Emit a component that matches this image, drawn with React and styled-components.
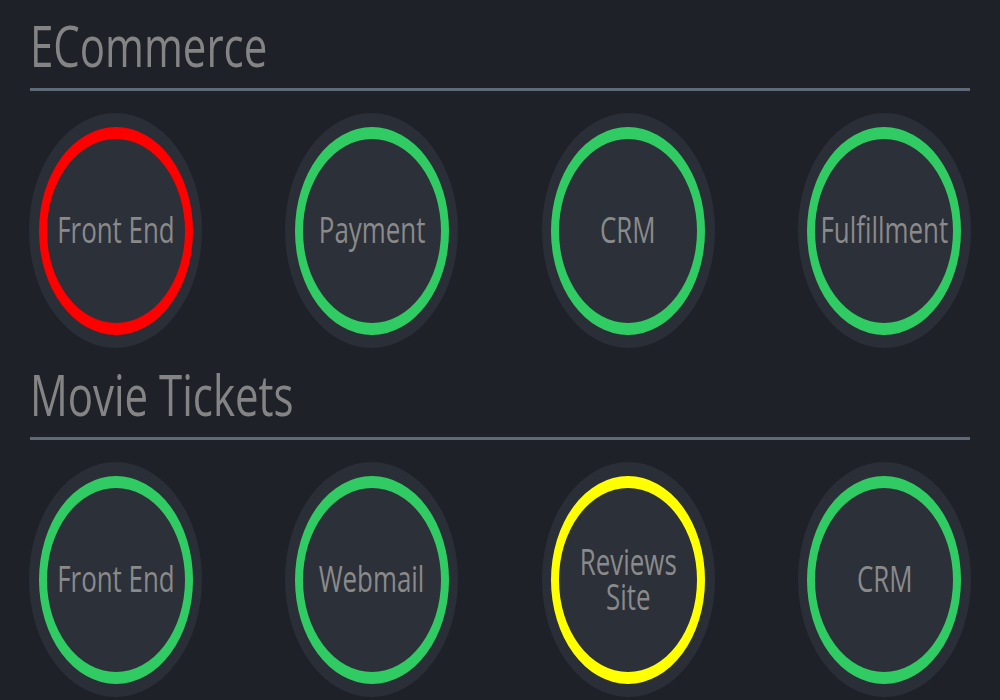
import React from 'react';
import styled, { createGlobalStyle } from 'styled-components';

const Global = createGlobalStyle`
  html, body { margin: 0; padding: 0; background: #1f2128; }
  body { font-family: "Open Sans", "Noto Sans", sans-serif; }
`;

const Page = styled.main`
  width: 1000px;
  height: 700px;
  overflow: hidden;
  box-sizing: border-box;
  padding: 17px 30px 0;
  background: #1f2128;
`;

const Section = styled.section`
  & + & { margin-top: 18px; }
`;

const Title = styled.h1`
  margin: 0;
  font-weight: 400;
  font-size: 56px;
  line-height: 56px;
  color: #848484;
  white-space: nowrap;
  transform: scaleX(0.75);
  transform-origin: left center;
`;

const Rule = styled.hr`
  margin: 15px 0 0;
  border: 0;
  height: 3px;
  background: #5f6a79;
`;

const Row = styled.div`
  display: flex;
  justify-content: space-between;
  margin: 22px -1px 0;
`;

const Halo = styled.div`
  width: 173px;
  height: 235px;
  flex: none;
  border-radius: 50%;
  background: #2a2e36;
  display: flex;
  align-items: center;
  justify-content: center;
`;

const Ring = styled.div`
  width: 154px;
  height: 208px;
  box-sizing: border-box;
  padding-bottom: 4px;
  border-radius: 50%;
  border-style: solid;
  border-width: 12px 8px;
  border-color: ${p => p.$color};
  background: #2c3038;
  display: flex;
  align-items: center;
  justify-content: center;
`;

const Label = styled.span`
  font-size: 37px;
  line-height: 35px;
  color: #8a8a8a;
  text-align: center;
  white-space: pre;
  transform: scaleX(0.7);
  transform-origin: center center;
`;

const STATUS = { ok: '#30cb63', down: '#ff0000', warn: '#ffff00' };

const groups = [
  {
    name: 'ECommerce',
    services: [
      { name: 'Front End', status: 'down' },
      { name: 'Payment', status: 'ok' },
      { name: 'CRM', status: 'ok' },
      { name: 'Fulfillment', status: 'ok' },
    ],
  },
  {
    name: 'Movie Tickets',
    services: [
      { name: 'Front End', status: 'ok' },
      { name: 'Webmail', status: 'ok' },
      { name: 'Reviews\nSite', status: 'warn' },
      { name: 'CRM', status: 'ok' },
    ],
  },
];

export default function App() {
  return (
    <>
      <Global />
      <Page>
        {groups.map(g => (
          <Section key={g.name}>
            <Title>{g.name}</Title>
            <Rule />
            <Row>
              {g.services.map(s => (
                <Halo key={s.name}>
                  <Ring $color={STATUS[s.status]}>
                    <Label>{s.name}</Label>
                  </Ring>
                </Halo>
              ))}
            </Row>
          </Section>
        ))}
      </Page>
    </>
  );
}
